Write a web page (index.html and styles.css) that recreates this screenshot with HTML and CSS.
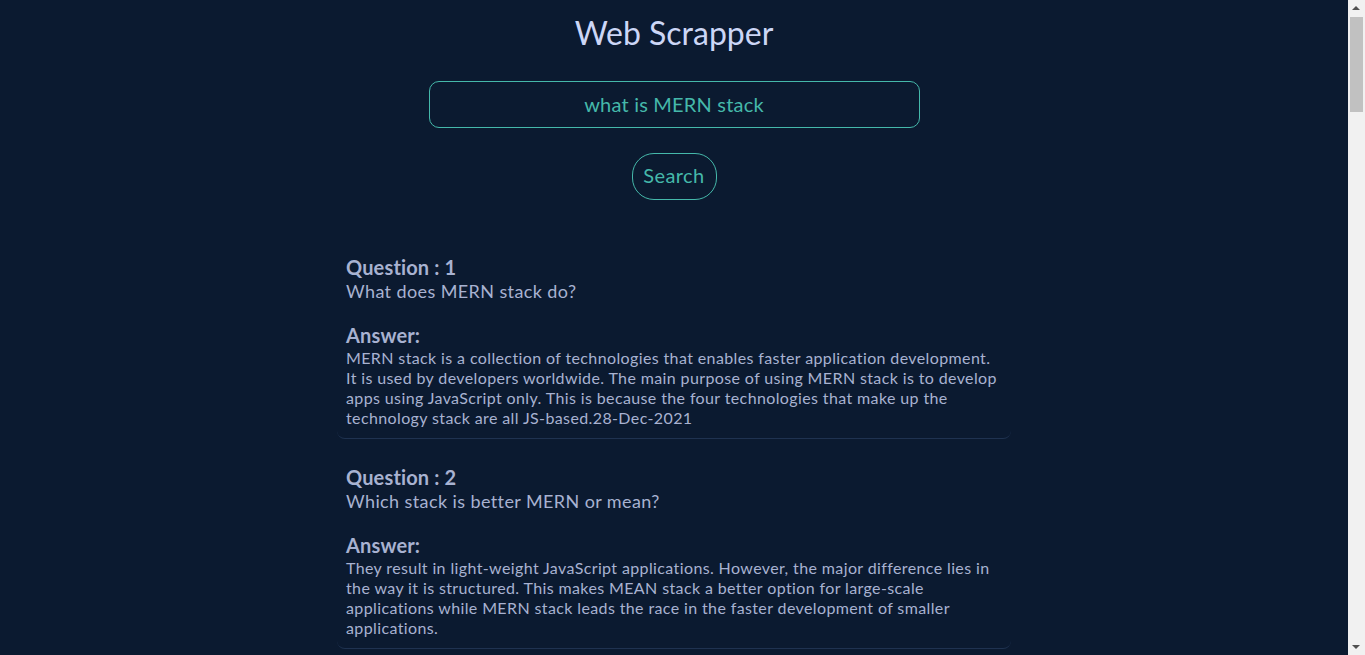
FILE: index.html
```html
<!DOCTYPE html>
<html lang="en">
<head>
<meta charset="utf-8">
<title>Web Scrapper</title>
<link rel="stylesheet" href="styles.css">
</head>
<body>
<div class="app">
  <h1 class="title">Web Scrapper</h1>
  <form class="search">
    <input class="search-input" type="text" value="what is MERN stack">
    <button class="search-btn" type="button">Search</button>
  </form>
  <div class="results">
    <div class="card">
      <div class="q-label">Question : 1</div>
      <div class="q-text">What does MERN stack do?</div>
      <div class="a-label">Answer:</div>
      <div class="a-text">MERN stack is a collection of technologies that enables faster application development. It is used by developers worldwide. The main purpose of using MERN stack is to develop apps using JavaScript only. This is because the four technologies that make up the technology stack are all JS-based.28-Dec-2021</div>
    </div>
    <div class="card">
      <div class="q-label">Question : 2</div>
      <div class="q-text">Which stack is better MERN or mean?</div>
      <div class="a-label">Answer:</div>
      <div class="a-text">They result in light-weight JavaScript applications. However, the major difference lies in the way it is structured. This makes MEAN stack a better option for large-scale applications while MERN stack leads the race in the faster development of smaller applications.</div>
    </div>
  </div>
</div>
<div class="scrollbar" aria-hidden="true">
  <div class="sb-arrow sb-up"></div>
  <div class="sb-thumb"></div>
  <div class="sb-arrow sb-down"></div>
</div>
</body>
</html>
```

FILE: styles.css
```css
html, body {
  margin: 0;
  padding: 0;
  background: #0b1a30;
  overflow: hidden;
}
body {
  font-family: "Lato", "Noto Sans", sans-serif;
  color: #a8b2d1;
  height: 655px;
  padding-right: 17px;
  box-sizing: border-box;
}
.app {
  display: flex;
  flex-direction: column;
  align-items: center;
  padding-top: 14px;
}
.title {
  margin: 0;
  font-size: 32px;
  font-weight: 400;
  line-height: 38px;
  color: #ccd6f6;
}
.search {
  display: flex;
  flex-direction: column;
  align-items: center;
  margin-top: 29px;
}
.search-input {
  box-sizing: border-box;
  width: 491px;
  height: 47px;
  padding-bottom: 2px;
  background: transparent;
  border: 1px solid #45b8aa;
  border-radius: 10px;
  color: #45b8aa;
  font-family: inherit;
  font-size: 20px;
  letter-spacing: 0.2px;
  text-align: center;
  outline: none;
}
.search-btn {
  box-sizing: border-box;
  margin-top: 25px;
  width: 85px;
  height: 47px;
  padding: 0 0 3px;
  background: transparent;
  border: 1px solid #45b8aa;
  border-radius: 22px;
  color: #45b8aa;
  font-family: inherit;
  font-size: 20px;
  letter-spacing: 0.4px;
}
.results {
  width: 674px;
  margin-top: 45px;
  display: flex;
  flex-direction: column;
  gap: 16px;
}
.card {
  padding: 10px 10px 10px 9px;
  border-bottom: 1px solid #1f3250;
  border-radius: 8px;
}
.q-label, .a-label {
  font-size: 20px;
  font-weight: 700;
  line-height: 24px;
  letter-spacing: 0.15px;
}
.q-text {
  font-size: 18px;
  line-height: 24px;
  letter-spacing: 0.4px;
}
.a-label {
  margin-top: 20px;
}
.a-text {
  margin-top: 1px;
  font-size: 16px;
  line-height: 20px;
  letter-spacing: 0.38px;
}
.scrollbar {
  position: fixed;
  top: 0;
  right: 0;
  width: 17px;
  height: 100vh;
  background: #f1f1f1;
}
.sb-thumb {
  position: absolute;
  top: 17px;
  left: 2px;
  width: 13px;
  height: 95px;
  background: #c1c1c1;
}
.sb-arrow {
  position: absolute;
  left: 4px;
  width: 0;
  height: 0;
  border-left: 4px solid transparent;
  border-right: 4px solid transparent;
}
.sb-up {
  top: 6px;
  border-bottom: 4px solid #505050;
}
.sb-down {
  bottom: 6px;
  border-top: 4px solid #505050;
}
```
